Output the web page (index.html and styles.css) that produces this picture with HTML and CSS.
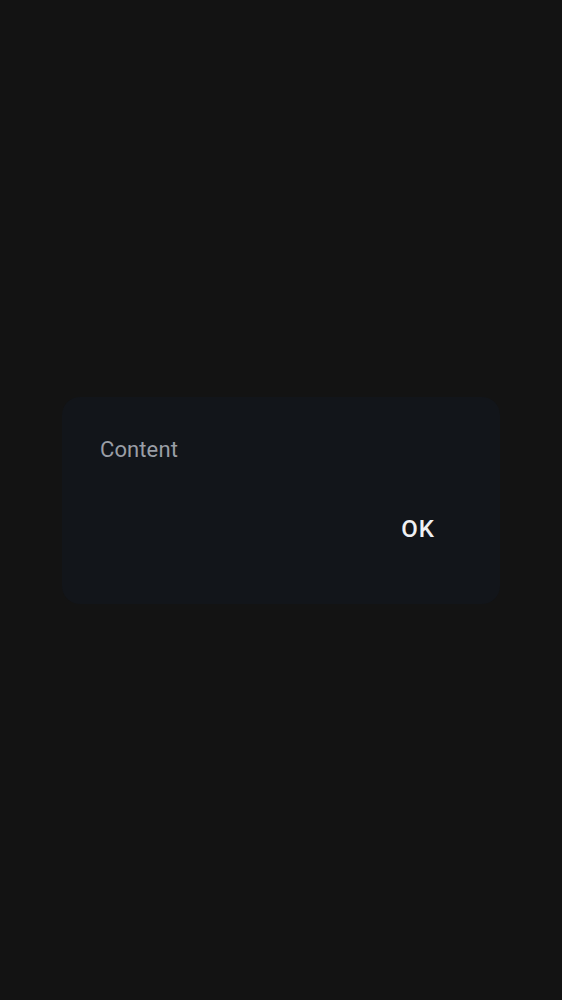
FILE: index.html
```html
<!DOCTYPE html>
<html>
<head>
<meta charset="utf-8">
<link rel="stylesheet" href="styles.css">
</head>
<body>
<div class="screen">
  <div class="dialog">
    <div class="content">Content</div>
    <div class="actions">
      <button class="btn">OK</button>
    </div>
  </div>
</div>
</body>
</html>
```
FILE: styles.css
```css
html, body {
  margin: 0;
  padding: 0;
  background: #131313;
}
.screen {
  height: 1000px;
  display: flex;
  align-items: center;
  justify-content: center;
  font-family: Roboto, "Noto Sans", sans-serif;
}
.dialog {
  width: 438px;
  height: 207px;
  box-sizing: border-box;
  background: #12151a;
  border-radius: 18px;
  padding: 39px 38px 0 38px;
  display: flex;
  flex-direction: column;
}
.content {
  font-size: 22px;
  line-height: 28px;
  color: #9a9ea6;
  letter-spacing: 0.1px;
}
.actions {
  display: flex;
  justify-content: flex-end;
  margin-top: 50px;
}
.btn {
  background: none;
  border: none;
  padding: 0 27px 0 0;
  font-family: Roboto, "Noto Sans", sans-serif;
  font-weight: 500;
  font-size: 24px;
  line-height: 30px;
  letter-spacing: 1px;
  color: #eef0f4;
}
```
